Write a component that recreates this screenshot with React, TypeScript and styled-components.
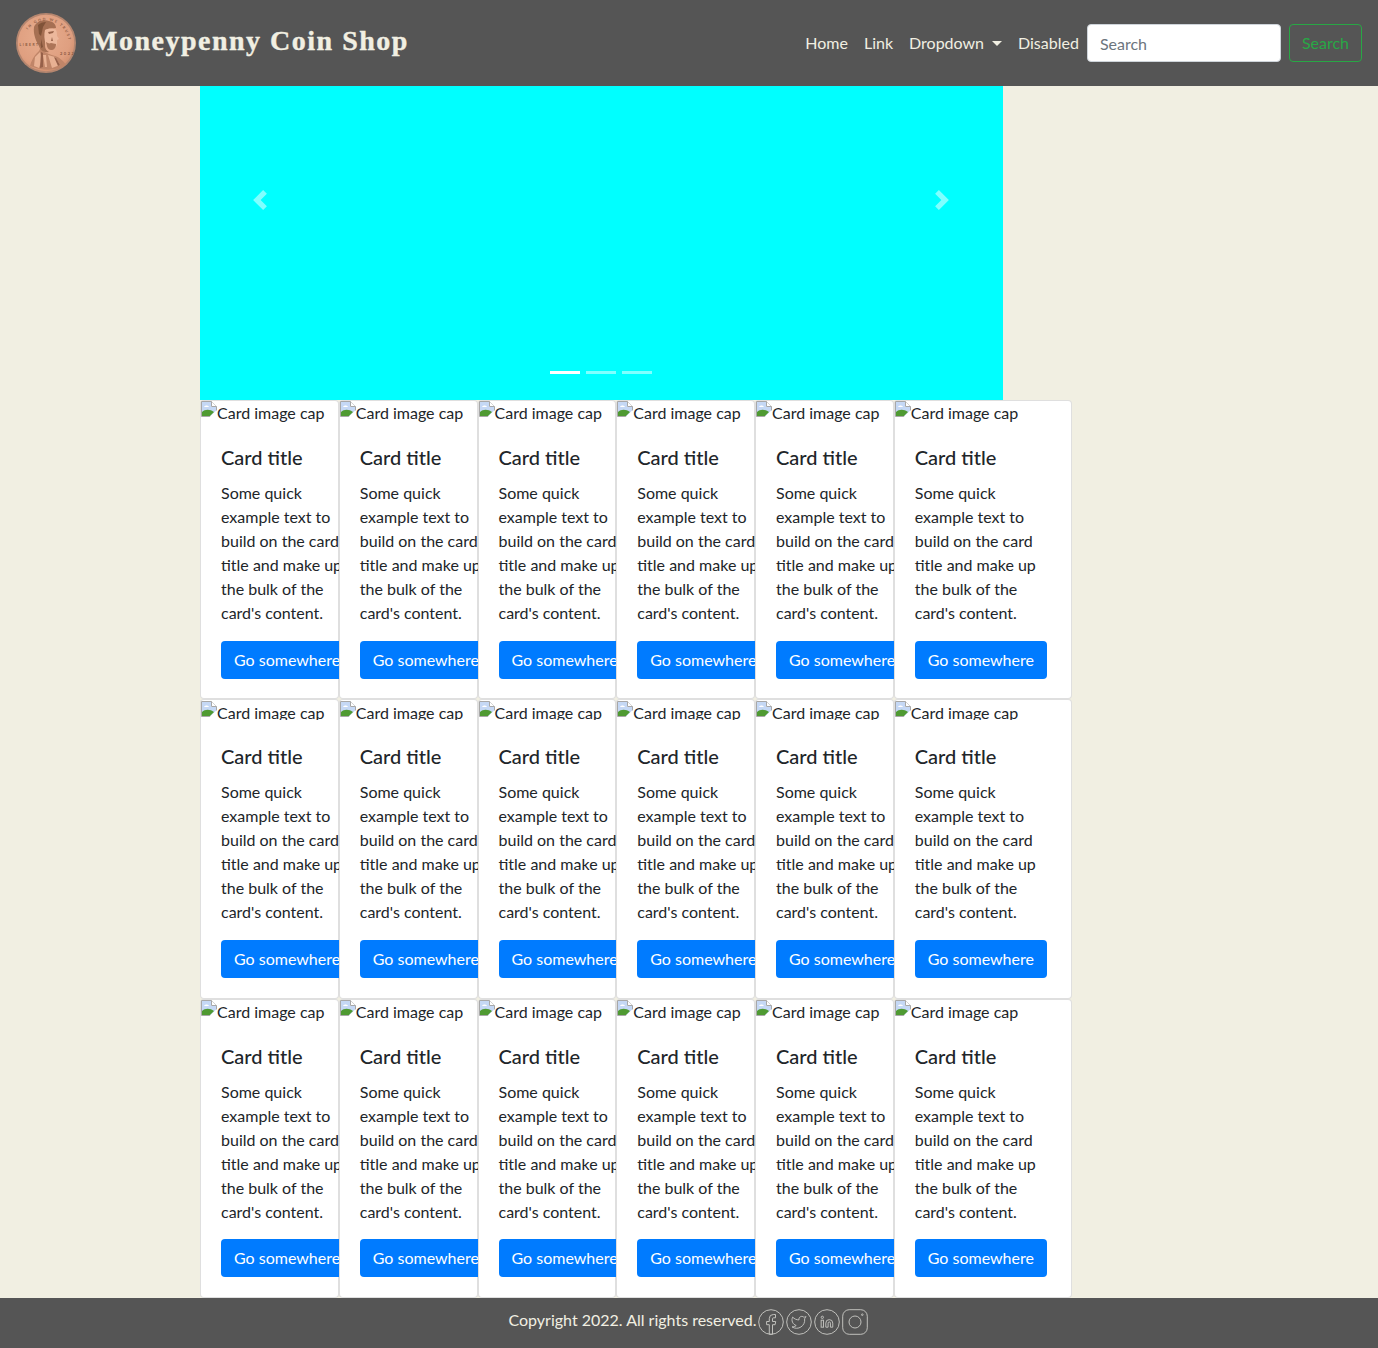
import styled, { createGlobalStyle } from 'styled-components';

const GlobalStyle = createGlobalStyle`
  * {
    box-sizing: border-box;
  }
  body {
    margin: 0;
    background: #f1efe2;
    color: #212529;
    font-family: Lato, "Noto Sans", sans-serif;
    font-size: 16px;
    line-height: 1.5;
  }
`;

const Navbar = styled.nav`
  height: 86px;
  padding: 8px 16px;
  background: #555555;
  display: flex;
  align-items: center;
  justify-content: space-between;
`;

const Brand = styled.a`
  display: flex;
  align-items: center;
  gap: 15px;
  color: #f1efe2;
  font-family: "Liberation Serif", serif;
  font-size: 28px;
  font-weight: 700;
  letter-spacing: 1.5px;
  line-height: 1;
  -webkit-text-stroke: 0.4px #f1efe2;
  text-decoration: none;
`;

const BrandName = styled.span`
  padding-bottom: 5px;
`;

const NavRight = styled.div`
  display: flex;
  align-items: center;
`;

const NavLink = styled.a`
  display: inline-flex;
  align-items: center;
  padding: 8px;
  color: #f1efe2;
  text-decoration: none;
`;

const Caret = styled.span`
  margin-left: 8px;
  border-top: 5px solid #f1efe2;
  border-left: 5px solid transparent;
  border-right: 5px solid transparent;
`;

const SearchForm = styled.form`
  display: flex;
  gap: 8px;
`;

const SearchInput = styled.input`
  width: 194px;
  height: 38px;
  padding: 6px 12px;
  border: 1px solid #ced4da;
  border-radius: 4px;
  background: #ffffff;
  font: inherit;
  color: #495057;

  &::placeholder {
    color: #6c757d;
    opacity: 1;
  }
`;

const SearchButton = styled.button`
  height: 38px;
  padding: 6px 12px;
  border: 1px solid #28a745;
  border-radius: 4px;
  background: transparent;
  color: #28a745;
  font: inherit;
`;

const Main = styled.main`
  width: 1072px;
  padding-left: 200px;
`;

const Carousel = styled.div`
  position: relative;
  width: 803px;
  height: 314px;
  background: #00ffff;
`;

const CarouselControl = styled.a<{ $side: 'left' | 'right' }>`
  position: absolute;
  top: 0;
  ${({ $side }) => ($side === 'left' ? 'left: 0;' : 'right: 1px;')}
  width: 120px;
  height: 228px;
  display: flex;
  align-items: center;
  justify-content: center;
  opacity: 0.5;
`;

const Indicators = styled.ol`
  position: absolute;
  left: 0;
  right: 2px;
  bottom: 26px;
  margin: 0;
  padding: 0;
  list-style: none;
  display: flex;
  justify-content: center;
  gap: 6px;
`;

const Indicator = styled.li<{ $active?: boolean }>`
  width: 30px;
  height: 3px;
  background: #ffffff;
  opacity: ${({ $active }) => ($active ? 1 : 0.5)};
`;

const CardRow = styled.div`
  display: flex;
`;

const Card = styled.div<{ $wide?: boolean }>`
  position: relative;
  flex: 0 0 ${({ $wide }) => ($wide ? '178.25px' : '138.75px')};
  min-width: 0;
  height: 299.45px;
  background: #ffffff;
  border: 1px solid rgba(0, 0, 0, 0.125);
  border-radius: 4px;
`;

const ImageCap = styled.div`
  height: 23.9px;
  white-space: nowrap;
`;

const AltBox = styled.div<{ $clipped?: boolean }>`
  display: flex;
  align-items: flex-start;
  overflow: hidden;
  height: ${({ $clipped }) => ($clipped ? '19.5px' : '23.9px')};
  padding-top: ${({ $clipped }) => ($clipped ? '1px' : '0')};
`;

const CardBody = styled.div`
  width: 175px;
  padding: 20px;
`;

const CardTitle = styled.h5`
  margin: 0 0 12px;
  font-size: 20px;
  font-weight: 500;
  line-height: 1.2;
`;

const CardText = styled.p`
  margin: 0 0 15.65px;
`;

const GoButton = styled.a`
  display: inline-block;
  padding: 7px 13px;
  border-radius: 4px;
  background: #007bff;
  color: #ffffff;
  white-space: nowrap;
  text-decoration: none;
`;

const Footer = styled.footer`
  height: 50px;
  padding: 10px 2px 0 0;
  background: #555555;
  color: #f1efe2;
  display: flex;
  justify-content: center;
  align-items: flex-start;
`;

const Socials = styled.span`
  display: inline-flex;
  gap: 2px;
  margin: 1px 0 0 1px;
`;

const SocialSvg = styled.svg`
  width: 26px;
  height: 26px;
  fill: none;
  stroke: #c0c0bc;
  stroke-width: 1;
`;

const Coin = () => (
  <svg width="60" height="60" viewBox="0 0 60 60" aria-hidden="true">
    <defs>
      <radialGradient id="copper" cx="45%" cy="40%" r="65%">
        <stop offset="0%" stopColor="#e8ad8e" />
        <stop offset="75%" stopColor="#df9f80" />
        <stop offset="100%" stopColor="#cf8c6b" />
      </radialGradient>
      <filter id="soft">
        <feGaussianBlur stdDeviation="0.6" />
      </filter>
    </defs>
    <circle cx="30" cy="30" r="30" fill="#b5866f" />
    <circle cx="30" cy="30" r="28.2" fill="url(#copper)" />
    <g filter="url(#soft)">
      {/* bust */}
      <path d="M24 35c3 4 9 6 15 8 6 2 9 6 11 9-9 6-24 6-36 1 1-5 4-10 7-13 2-2 3-3 3-5z" fill="#c08567" />
      <path d="M19 44l5-5 2 7-3 9-5-2zM32 42l7 2 5 8-8 3zM27 42l2 12 2 0-1-12z" fill="#e8b193" />
      <path d="M25 39l2 1 0 14-3 1zM38 44l2 1 4 7-2 1z" fill="#96604a" />
      {/* hair and back of the head */}
      <path d="M18 14c2-5 9-8 15-6 5 1 7 4 7 7l-8 1-3 8 0 9c0 3 2 5 4 6-5 1-9-2-10-6-3-5-6-12-5-19z" fill="#a66f53" />
      <path d="M22 12c2-2 5-3 8-3l-3 5-2 9-2-2zM25 26l2 8-2 1z" fill="#805239" />
      {/* face */}
      <path d="M29 17c3-2 9-2 11 0 1 2 1 4 1 6l2 3-2 1 0 3c0 3-2 6-5 6-3 0-5-2-6-5-2-4-2-10-1-14z" fill="#ecb89c" />
      <path d="M32 19l6-1-1 2-4 1zM36 24l1 4-2 0z" fill="#99634a" />
      <path d="M30 29c2 1 3 2 5 1l5 1c0 4-2 6-5 6-3 0-4-3-5-8z" fill="#ad7558" />
    </g>
    <path id="coinRim" d="M7.5 30a22.5 22.5 0 0 1 45 0" fill="none" />
    <text fontSize="3.6" fill="#8d5a42" fontFamily="Lato, sans-serif" fontWeight="700">
      <textPath href="#coinRim" startOffset="20%">IN GOD WE TRUST</textPath>
    </text>
    <text x="3.5" y="33" fontSize="3.4" fill="#8d5a42" fontFamily="Lato, sans-serif">LIBERTY</text>
    <text x="44" y="42" fontSize="4" fill="#8d5a42" fontFamily="Lato, sans-serif">2022</text>
  </svg>
);

const BrokenImageIcon = () => (
  <svg width="16" height="16" viewBox="0 0 16 16" aria-hidden="true" style={{ flex: 'none' }}>
    <path d="M0.5 0.5H10.5L15.5 5.5V15.5H0.5Z" fill="#ffffff" stroke="#a8a8a8" />
    <path d="M1 1H10V6H15V10L10 15H1Z" fill="#c5d8f5" />
    <path d="M3 6c1-2 4-2 5 0z" fill="#ffffff" />
    <path d="M1 15V11C4 8 9 8 13 11L9 15Z" fill="#4f9a32" />
    <path d="M10.5 0.5V5.5H15.5" fill="#ffffff" stroke="#a8a8a8" />
    <path d="M16 9L8.5 16H16Z" fill="#ffffff" />
  </svg>
);

const Chevron = ({ flip }: { flip?: boolean }) => (
  <svg
    width="20"
    height="20"
    viewBox="0 0 8 8"
    fill="#ffffff"
    aria-hidden="true"
    style={flip ? { transform: 'scaleX(-1)' } : undefined}
  >
    <path d="M5.25 0l-4 4 4 4 1.5-1.5L4.25 4l2.5-2.5L5.25 0z" />
  </svg>
);

const FacebookIcon = () => (
  <SocialSvg viewBox="0 0 26 26">
    <circle cx="13" cy="13" r="12.3" />
    <path d="M17.5 5.5h-2.2a4 4 0 0 0-4 4v3H8.6v3.2h2.7v9.6h3.2v-9.6h2.6l.6-3.2h-3.2V9.8a1 1 0 0 1 1-1h2z" />
  </SocialSvg>
);

const TwitterIcon = () => (
  <SocialSvg viewBox="0 0 26 26">
    <circle cx="13" cy="13" r="12.3" />
    <path
      transform="translate(4.6 4.6) scale(0.7)"
      strokeWidth="1.4"
      d="M22 4s-.7 2.1-2 3.4c1.6 10-9.4 17.3-18 11.6 2.2.1 4.4-.6 6-2C3 15.5.5 9.6 3 5c2.2 2.6 5.6 4.1 9 4-.9-4.2 4-6.6 7-3.8 1.1 0 3-1.2 3-1.2z"
    />
  </SocialSvg>
);

const LinkedinIcon = () => (
  <SocialSvg viewBox="0 0 26 26">
    <circle cx="13" cy="13" r="12.3" />
    <g transform="translate(6 6) scale(0.58)" strokeWidth="1.7">
      <path d="M16 8a6 6 0 0 1 6 6v7h-4v-7a2 2 0 0 0-2-2 2 2 0 0 0-2 2v7h-4v-7a6 6 0 0 1 6-6z" />
      <rect x="2" y="9" width="4" height="12" />
      <circle cx="4" cy="4" r="2" />
    </g>
  </SocialSvg>
);

const InstagramIcon = () => (
  <SocialSvg viewBox="0 0 26 26">
    <rect x="0.7" y="0.7" width="24.6" height="24.6" rx="6.5" />
    <circle cx="13" cy="13" r="6" />
    <circle cx="20.3" cy="5.7" r="0.8" />
  </SocialSvg>
);

const ProductCard = ({ wide, clipped }: { wide?: boolean; clipped?: boolean }) => (
  <Card $wide={wide}>
    <ImageCap>
      <AltBox $clipped={clipped}>
        <BrokenImageIcon />
        Card image cap
      </AltBox>
    </ImageCap>
    <CardBody>
      <CardTitle>Card title</CardTitle>
      <CardText>
        Some quick example text to build on the card title and make up the bulk of the card's content.
      </CardText>
      <GoButton href="#">Go somewhere</GoButton>
    </CardBody>
  </Card>
);

const rows = [0, 1, 2];
const columns = [0, 1, 2, 3, 4, 5];

export default function App() {
  return (
    <>
      <GlobalStyle />
      <Navbar>
        <Brand href="#">
          <Coin />
          <BrandName>Moneypenny Coin Shop</BrandName>
        </Brand>
        <NavRight>
          <NavLink href="#">Home</NavLink>
          <NavLink href="#">Link</NavLink>
          <NavLink href="#">
            Dropdown
            <Caret />
          </NavLink>
          <NavLink href="#">Disabled</NavLink>
          <SearchForm>
            <SearchInput placeholder="Search" />
            <SearchButton type="button">Search</SearchButton>
          </SearchForm>
        </NavRight>
      </Navbar>
      <Main>
        <Carousel>
          <CarouselControl $side="left">
            <Chevron />
          </CarouselControl>
          <CarouselControl $side="right">
            <Chevron flip />
          </CarouselControl>
          <Indicators>
            <Indicator $active />
            <Indicator />
            <Indicator />
          </Indicators>
        </Carousel>
        {rows.map((row) => (
          <CardRow key={row}>
            {columns.map((col) => (
              <ProductCard key={col} wide={col === 5} clipped={row === 1} />
            ))}
          </CardRow>
        ))}
      </Main>
      <Footer>
        Copyright 2022. All rights reserved.
        <Socials>
          <FacebookIcon />
          <TwitterIcon />
          <LinkedinIcon />
          <InstagramIcon />
        </Socials>
      </Footer>
    </>
  );
}
